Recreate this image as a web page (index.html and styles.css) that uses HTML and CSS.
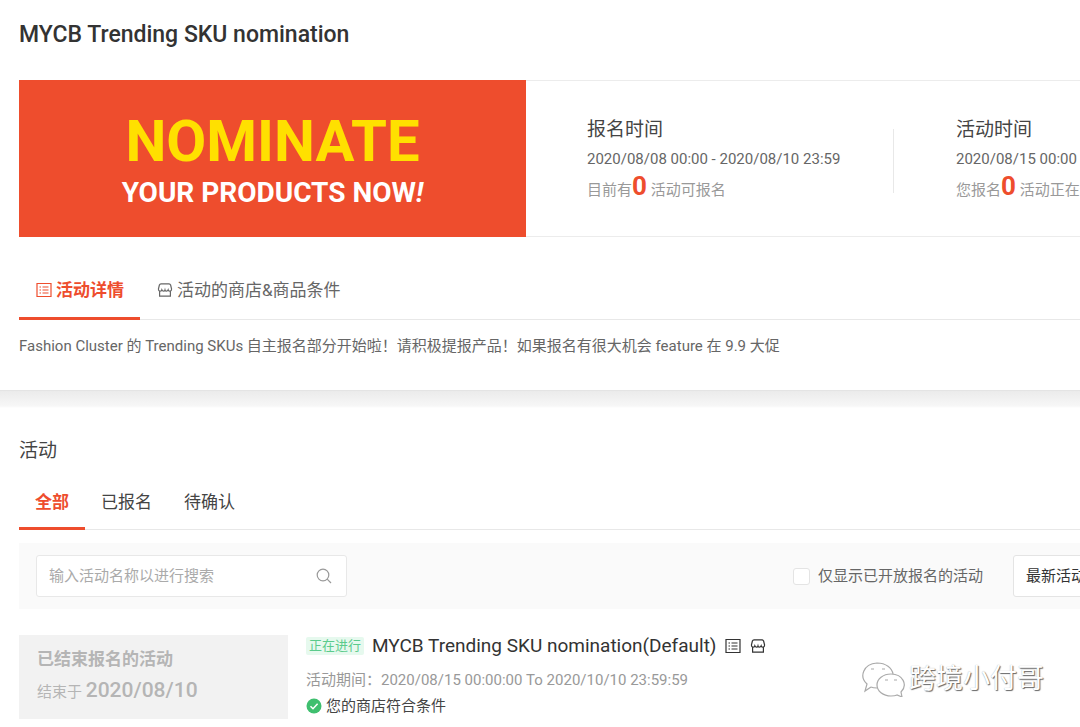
FILE: index.html
```html
<!DOCTYPE html>
<html lang="zh-CN">
<head>
<meta charset="utf-8">
<meta name="viewport" content="width=device-width, initial-scale=1">
<title>MYCB Trending SKU nomination</title>
<link rel="stylesheet" href="styles.css">
</head>
<body>
<svg class="sprite" aria-hidden="true">
  <symbol id="i-list" viewBox="0 0 16 16"><path d="M1 1.500h14v13H1zM3.500 5h1.500M6.500 5h6M3.500 8h1.500M6.500 8h6M3.500 11h1.500M6.500 11h6"/></symbol>
  <symbol id="i-shop" viewBox="0 0 16 16"><path d="M4 1.800h8q1.200 0 1.600 1.200l1 4q0 2-1.600 2.200-1.400 0-1.800-1.400-.6 1.400-1.700 1.400T8 7.800q-.4 1.400-1.500 1.400T4.800 7.800Q4.400 9.200 3 9.200 1.400 9 1.400 7l1-4Q2.800 1.800 4 1.800zM2.600 9.200v5h10.800v-5"/></symbol>
</svg>
<div class="page">
  <section class="panel overview">
    <h1 class="title">MYCB Trending SKU nomination</h1>
    <div class="summary">
      <div class="banner">
        <strong class="banner-main">NOMINATE</strong>
        <span class="banner-sub">YOUR PRODUCTS NOW<i>!</i></span>
      </div>
      <div class="period">
        <h2 class="heading">报名时间</h2>
        <p class="dates">2020/08/08 00:00 - 2020/08/10 23:59</p>
        <p class="count">目前有<b>0</b> 活动可报名</p>
      </div>
      <div class="period">
        <h2 class="heading">活动时间</h2>
        <p class="dates">2020/08/15 00:00 - 2020/10/10 23:59</p>
        <p class="count">您报名<b>0</b> 活动正在进行</p>
      </div>
    </div>
    <nav class="tabs">
      <button class="tab active" type="button"><svg class="icon"><use href="#i-list"/></svg>活动详情</button>
      <button class="tab" type="button"><svg class="icon"><use href="#i-shop"/></svg>活动的商店&amp;商品条件</button>
    </nav>
    <p class="intro">Fashion Cluster 的 Trending SKUs 自主报名部分开始啦！请积极提报产品！如果报名有很大机会 feature 在 9.9 大促</p>
  </section>

  <section class="panel activities">
    <h2 class="heading">活动</h2>
    <nav class="tabs filters">
      <button class="tab active" type="button">全部</button>
      <button class="tab" type="button">已报名</button>
      <button class="tab" type="button">待确认</button>
    </nav>
    <div class="toolbar">
      <div class="search">
        <input type="text" aria-label="搜索活动" placeholder="输入活动名称以进行搜索">
        <svg class="search-icon" viewBox="0 0 16 16"><circle cx="7" cy="7" r="5.800"/><path d="M11.200 11.200 15 15"/></svg>
      </div>
      <label class="check"><input type="checkbox">仅显示已开放报名的活动</label>
      <select class="sort" aria-label="排序"><option>最新活动</option></select>
    </div>
    <article class="activity">
      <div class="closed">
        <strong>已结束报名的活动</strong>
        <p>结束于 <time>2020/08/10</time></p>
      </div>
      <div class="details">
        <div class="name-row">
          <span class="tag">正在进行</span>
          <h3 class="name">MYCB Trending SKU nomination(Default)</h3>
          <svg class="icon"><use href="#i-list"/></svg>
          <svg class="icon last"><use href="#i-shop"/></svg>
        </div>
        <p class="range">活动期间：2020/08/15 00:00:00 To 2020/10/10 23:59:59</p>
        <p class="status"><svg class="ok" viewBox="0 0 16 16"><circle cx="8" cy="8" r="7.500"/><path d="m4.500 8.200 2.500 2.500 4.600-5"/></svg>您的商店符合条件</p>
      </div>
    </article>
  </section>
</div>
<aside class="watermark">
  <svg viewBox="0 0 44 36"><path d="M10 26 4 30l2-7C-2 16 2 3 16 2c9 0 15 5 16 11"/><path d="M30 13c-8 0-14 5-14 11s6 11 14 11c2 0 4 0 6-1l5 2-1-5c7-7 2-18-10-18z"/><path d="M10 26c2 1 4 1 6 1M10 8h3M21 8h3M24 19h3M33 19h3"/></svg>
  <span>跨境小付哥</span>
</aside>
</body>
</html>
```
FILE: styles.css
```css
* { box-sizing: border-box; }
body {
  margin: 0;
  overflow-x: hidden;
  background: #fff;
  color: #333;
  font: 15px/20px Roboto, "Noto Sans CJK SC", sans-serif;
}
h1, h2, h3, p { margin: 0; font-weight: 400; }
button, input, select { font: inherit; color: inherit; }
.sprite { display: none; }
.page { min-width: 1180px; }
.panel { padding: 0 19px; }
.overview {
  padding-top: 21px;
  padding-bottom: 34px;
  border-bottom: 1px solid #e4e4e4;
}
.title { font-size: 23px; line-height: 28px; font-weight: 500; color: #333; }
.summary {
  display: flex;
  margin-top: 31px;
  border: solid #ececec;
  border-width: 1px 0;
}
.banner {
  flex: none;
  width: 507px;
  margin: -1px 0;
  display: flex;
  flex-direction: column;
  align-items: center;
  justify-content: center;
  background: #ee4d2d;
  color: #fff;
}
.banner-main { font-size: 58px; line-height: 69px; font-weight: 700; color: #ffe000; }
.banner-sub { font-size: 28px; line-height: 34px; font-weight: 700; }
.period {
  flex: none;
  position: relative;
  width: 367px;
  padding: 37px 0 31px 61px;
}
.period + .period { padding-left: 63px; }
.period + .period::before {
  content: "";
  position: absolute;
  left: 0;
  top: 48px;
  height: 64px;
  border-left: 1px solid #e8e8e8;
}
.heading { font-size: 19px; line-height: 24px; color: #444; }
.dates { margin-top: 7px; color: #666; white-space: nowrap; }
.count { display: flex; align-items: baseline; line-height: 30px; margin-top: 2px; color: #999; white-space: pre; }
.count b { font-size: 26px; color: #ee4d2d; }
.tabs { display: flex; margin-top: 25px; border-bottom: 1px solid #e8e8e8; }
.tab {
  display: flex;
  align-items: center;
  gap: 4px;
  padding: 17px 16px 16px 17px;
  margin-bottom: -1px;
  border: 0;
  border-bottom: 3px solid transparent;
  background: none;
  font-size: 17px;
  line-height: 22px;
  color: #666;
}
.tab.active { border-color: #ee4d2d; color: #ee4d2d; font-weight: 700; }
.icon { flex: none; width: 16px; height: 16px; fill: none; stroke: currentColor; stroke-width: 1.2; }
.intro { margin-top: 16px; color: #666; }
.activities {
  padding-top: 48px;
  background: linear-gradient(#ebebeb, #f7f7f7 15px, #fff 17px);
}
.filters { margin-top: 12px; }
.filters .tab { padding: 16px 16px 14px; color: #444; }
.filters .tab.active { color: #ee4d2d; }
.toolbar {
  display: flex;
  align-items: center;
  margin-top: 13px;
  padding: 12px 17px;
  background: #fafafa;
}
.search {
  display: flex;
  align-items: center;
  width: 311px;
  height: 42px;
  padding: 0 14px 0 12px;
  border: 1px solid #e8e8e8;
  border-radius: 3px;
  background: #fff;
}
.search input { flex: 1; min-width: 0; padding: 0; border: 0; outline: 0; background: none; }
.search input::placeholder { color: #aaa; opacity: 1; }
.search-icon { width: 16px; height: 16px; fill: none; stroke: #999; stroke-width: 1.2; }
.check { display: flex; align-items: center; gap: 8px; margin: 0 30px 0 auto; color: #666; }
.check input {
  appearance: none;
  width: 17px;
  height: 17px;
  margin: 0;
  border: 1px solid #e4e4e4;
  border-radius: 3px;
  background: #fff;
}
.sort {
  appearance: none;
  width: 131px;
  height: 42px;
  padding: 0 12px;
  border: 1px solid #e4e4e4;
  border-radius: 3px;
  background: #fff;
}
.activity { display: flex; align-items: flex-start; gap: 18px; margin-top: 26px; }
.closed {
  width: 269px;
  padding: 12px 18px 10px;
  background: #f2f2f2;
  color: #b5b5b5;
}
.closed strong { display: block; font-size: 17px; line-height: 24px; }
.closed p { line-height: 34px; margin-top: 2px; }
.closed time { font-size: 21px; font-weight: 500; }
.name-row { display: flex; align-items: center; line-height: 22px; }
.tag {
  padding: 0 3px;
  margin-right: 8px;
  border-radius: 2px;
  background: #e6f9ee;
  color: #5bcb8c;
  font-size: 13px;
  line-height: 18px;
}
.name { font-size: 19px; margin-right: 9px; }
.name-row .last { margin-left: 9px; }
.range { margin-top: 13px; color: #999; }
.status { display: flex; align-items: center; gap: 4px; margin-top: 6px; color: #444; }
.ok { width: 16px; height: 16px; fill: #3fbf6f; }
.ok path { fill: none; stroke: #fff; stroke-width: 1.5; }
.watermark {
  position: absolute;
  right: 36px;
  top: 660px;
  display: flex;
  align-items: center;
  gap: 4px;
  font-size: 27px;
  line-height: 38px;
  color: #fff;
  text-shadow: 1px 1px 1px #666, 0 0 1px #aaa;
}
.watermark svg { width: 44px; height: 36px; fill: #fff; stroke: #aaa; stroke-width: 1.2; }
```
